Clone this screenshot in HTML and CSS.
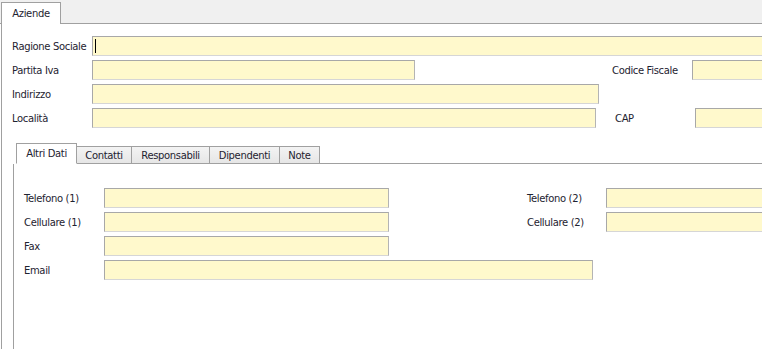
FILE: index.html
```html
<!DOCTYPE html>
<html lang="it">
<head>
  <meta charset="UTF-8">
  <title>Aziende</title>
  <link rel="stylesheet" href="styles.css">
</head>
<body>

<div class="tabstrip">
  <div class="tab tab-active">Aziende</div>
</div>

<div class="page">
  <div class="row">
    <label class="lbl">Ragione Sociale</label>
    <div class="field w-wide"><span class="caret"></span></div>
  </div>
  <div class="row">
    <label class="lbl">Partita Iva</label>
    <div class="field w-piva"></div>
    <label class="lbl lbl-cf">Codice Fiscale</label>
    <div class="field w-tail"></div>
  </div>
  <div class="row">
    <label class="lbl">Indirizzo</label>
    <div class="field w-addr"></div>
  </div>
  <div class="row">
    <label class="lbl">Località</label>
    <div class="field w-city"></div>
    <label class="lbl lbl-cap">CAP</label>
    <div class="field w-tail"></div>
  </div>

  <!-- Sub tabs -->
  <div class="subtabs">
    <div class="subtab subtab-active">Altri Dati</div>
    <div class="subtab st-contatti">Contatti</div>
    <div class="subtab st-resp">Responsabili</div>
    <div class="subtab st-dip">Dipendenti</div>
    <div class="subtab st-note">Note</div>
    <div class="subtab-fill"></div>
  </div>

  <div class="panel">
    <div class="row">
      <label class="lbl">Telefono (1)</label>
      <div class="field w-phone"></div>
      <label class="lbl lbl-right">Telefono (2)</label>
      <div class="field w-tail"></div>
    </div>
    <div class="row">
      <label class="lbl">Cellulare (1)</label>
      <div class="field w-phone"></div>
      <label class="lbl lbl-right">Cellulare (2)</label>
      <div class="field w-tail"></div>
    </div>
    <div class="row">
      <label class="lbl">Fax</label>
      <div class="field w-phone"></div>
    </div>
    <div class="row">
      <label class="lbl">Email</label>
      <div class="field w-mail"></div>
    </div>
  </div>
</div>

</body>
</html>
```

FILE: styles.css
```css
body {
  margin: 0;
  font-family: "DejaVu Sans", sans-serif;
  font-size: 10px;
  letter-spacing: -0.35px;
  color: #1e2330;
  background: #fff;
  overflow: hidden;
  height: 349px;
}

/* Outer tab strip */
.tabstrip {
  display: flex;
  height: 23px;
  background: #f0f0f0;
  border-bottom: 1px solid #a0a0a0;
  padding-left: 1px;
  align-items: flex-end;
}

.tab {
  width: 60px;
  height: 22px;
  line-height: 21px;
  text-align: center;
  border: 1px solid #a0a0a0;
  border-bottom: none;
  margin-bottom: -1px;
  box-sizing: border-box;
}

.tab-active {
  background: #fff;
}

/* Page body */
.page {
  margin-left: 1px;
  border-left: 1px solid #a0a0a0;
  height: 325px;
  padding: 12px 0 0 10px;
  box-sizing: border-box;
  overflow: hidden;
}

.row {
  display: flex;
  align-items: center;
  height: 20px;
  margin-bottom: 4px;
  white-space: nowrap;
}

.lbl {
  width: 80px;
  flex-shrink: 0;
}

.lbl-cf { margin-left: 197px; }
.lbl-cap { margin-left: 19px; }
.lbl-right { margin-left: 138px; width: 79px; }

.field {
  height: 20px;
  box-sizing: border-box;
  background: #fff9cc;
  border: 1px solid;
  border-color: #a8a8a8 #b4b4b4 #d6d6d6 #a8a8a8;
  flex-shrink: 0;
  position: relative;
}

.w-wide { width: 700px; }
.w-piva { width: 323px; }
.w-addr { width: 507px; }
.w-city { width: 504px; }
.w-tail { width: 200px; }
.w-phone { width: 285px; }
.w-mail { width: 489px; }

.caret {
  position: absolute;
  left: 2px;
  top: 2px;
  width: 1px;
  height: 14px;
  background: #000;
}

/* Sub tabs */
.subtabs {
  display: flex;
  align-items: flex-end;
  height: 21px;
  margin: 15px 0 0 1px;
  white-space: nowrap;
}

.subtab {
  height: 18px;
  line-height: 17px;
  text-align: center;
  box-sizing: border-box;
  background: linear-gradient(#f3f3f3, #e6e6e6);
  border: 1px solid #a0a0a0;
  border-left: none;
}

.st-contatti { width: 55px; }
.st-resp { width: 78px; }
.st-dip { width: 70px; }
.st-note { width: 40px; }

.subtab-active {
  height: 21px;
  line-height: 20px;
  width: 61px;
  margin-left: 3px;
  background: #fff;
  border-left: 1px solid #a0a0a0;
  border-bottom-color: #fff;
}

.subtab-fill {
  flex: 1;
  height: 1px;
  background: #a0a0a0;
}

.panel {
  border-left: 1px solid #a0a0a0;
  margin-left: 1px;
  padding: 24px 0 0 10px;
  height: 200px;
}
```
